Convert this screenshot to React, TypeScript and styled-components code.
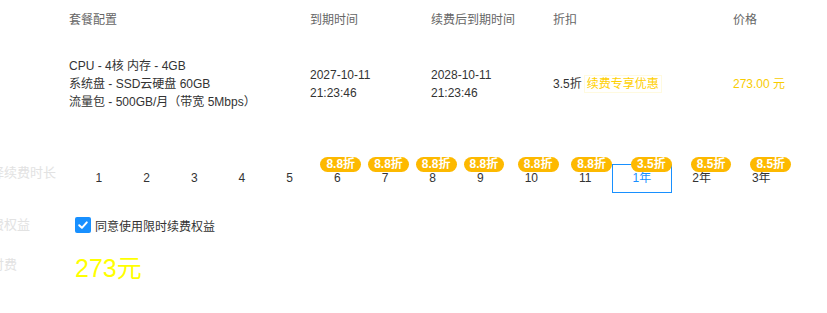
import React from "react";
import styled, { createGlobalStyle } from "styled-components";

const Global = createGlobalStyle`
  html, body { margin: 0; padding: 0; background: #fff; overflow: hidden; }
  body {
    font-family: "Liberation Sans", "Noto Sans CJK SC", sans-serif;
    font-size: 12px;
    color: #333;
  }
`;

const Page = styled.div`
  width: 827px;
  height: 313px;
  overflow: hidden;
`;

const Table = styled.div`
  display: grid;
  grid-template-columns: 241px 121px 122px 180px 1fr;
  padding-left: 69px;
`;

const HeadCell = styled.div`
  height: 40px;
  line-height: 40px;
  color: #666;
`;

const BodyCell = styled.div`
  height: 88px;
  display: flex;
  flex-direction: column;
  justify-content: center;
  line-height: 18px;
  color: #333;
`;

const DiscountCell = styled(BodyCell)`
  flex-direction: row;
  align-items: center;
  justify-content: flex-start;
`;

const Tag = styled.span`
  margin-left: 2px;
  padding: 0 2px;
  border: 1px solid #fffadf;
  color: #ffd000;
  line-height: 16px;
`;

const Price = styled.span`
  color: #f8cc00;
`;

const Form = styled.div`
  margin-left: -22px;
  margin-top: 36px;
  display: flex;
  flex-direction: column;
`;

const FormRow = styled.div<{ $gap: number }>`
  display: grid;
  grid-template-columns: 97px 1fr;
  align-items: start;
  margin-bottom: ${(p) => p.$gap}px;
`;

const Label = styled.div<{ $top?: number }>`
  color: #e2e2e2;
  font-size: 13px;
  line-height: 18px;
  white-space: nowrap;
  margin-top: ${(p) => p.$top ?? 0}px;
`;

const Options = styled.div`
  display: flex;
`;

const Option = styled.div<{ $active?: boolean }>`
  position: relative;
  height: 29px;
  line-height: 27px;
  padding: 0 19.5px;
  border: 1px solid ${(p) => (p.$active ? "#1890ff" : "transparent")};
  color: ${(p) => (p.$active ? "#1890ff" : "#333")};
  box-sizing: border-box;
  white-space: nowrap;
  cursor: pointer;
`;

const Badge = styled.span`
  position: absolute;
  top: -8px;
  right: -1px;
  height: 15px;
  line-height: 15px;
  padding: 0 6px;
  border-radius: 8px;
  background: #fdb900;
  color: #fff;
  font-weight: bold;
  font-size: 12px;
`;

const CheckLine = styled.label`
  display: flex;
  align-items: center;
  gap: 4px;
  height: 20px;
  color: #333;
`;

const Box = styled.span`
  width: 16px;
  height: 16px;
  border-radius: 2px;
  background: #1890ff;
  display: inline-flex;
  align-items: center;
  justify-content: center;
`;

const Total = styled.div`
  color: #ffff00;
  font-size: 25px;
  line-height: 30px;
`;

const options: { text: string; badge?: string; active?: boolean }[] = [
  { text: "1" },
  { text: "2" },
  { text: "3" },
  { text: "4" },
  { text: "5" },
  { text: "6", badge: "8.8折" },
  { text: "7", badge: "8.8折" },
  { text: "8", badge: "8.8折" },
  { text: "9", badge: "8.8折" },
  { text: "10", badge: "8.8折" },
  { text: "11", badge: "8.8折" },
  { text: "1年", badge: "3.5折", active: true },
  { text: "2年", badge: "8.5折" },
  { text: "3年", badge: "8.5折" },
];

export default function App() {
  return (
    <Page>
      <Global />
      <Table>
        <HeadCell>套餐配置</HeadCell>
        <HeadCell>到期时间</HeadCell>
        <HeadCell>续费后到期时间</HeadCell>
        <HeadCell>折扣</HeadCell>
        <HeadCell>价格</HeadCell>
        <BodyCell>
          <div>CPU - 4核 内存 - 4GB</div>
          <div>系统盘 - SSD云硬盘 60GB</div>
          <div>流量包 - 500GB/月（带宽 5Mbps）</div>
        </BodyCell>
        <BodyCell>
          <div>2027-10-11</div>
          <div>21:23:46</div>
        </BodyCell>
        <BodyCell>
          <div>2028-10-11</div>
          <div>21:23:46</div>
        </BodyCell>
        <DiscountCell>
          <span>3.5折</span>
          <Tag>续费专享优惠</Tag>
        </DiscountCell>
        <BodyCell>
          <Price>273.00 元</Price>
        </BodyCell>
      </Table>
      <Form>
        <FormRow $gap={22}>
          <Label>选择续费时长</Label>
          <Options>
            {options.map((o) => (
              <Option key={o.text} $active={o.active}>
                {o.text}
                {o.badge && <Badge>{o.badge}</Badge>}
              </Option>
            ))}
          </Options>
        </FormRow>
        <FormRow $gap={18}>
          <Label $top={1}>续费权益</Label>
          <CheckLine>
            <Box>
              <svg width="12" height="12" viewBox="0 0 12 12">
                <path d="M2.2 6.2 L4.9 8.8 L9.8 3.4" fill="none" stroke="#fff" strokeWidth="2" strokeLinecap="round" strokeLinejoin="round" />
              </svg>
            </Box>
            同意使用限时续费权益
          </CheckLine>
        </FormRow>
        <FormRow $gap={0}>
          <Label $top={3}>应付费</Label>
          <Total>273元</Total>
        </FormRow>
      </Form>
    </Page>
  );
}
